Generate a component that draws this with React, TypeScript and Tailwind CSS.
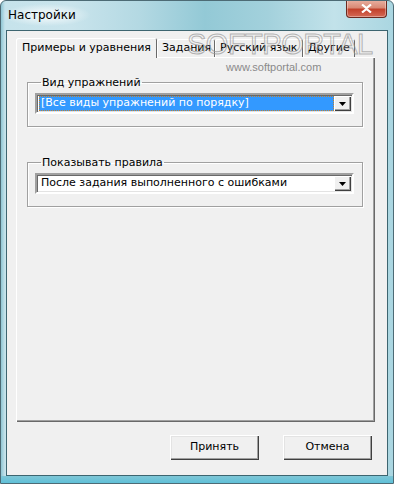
const FONT = "font-['DejaVu_Sans',_'Liberation_Sans',_sans-serif]";

const TABS = [
  { label: "Примеры и уравнения", w: "w-[141px]", active: true },
  { label: "Задания", w: "w-[58px]", active: false },
  { label: "Русский язык", w: "w-[88px]", active: false },
  { label: "Другие", w: "w-[52px]", active: false },
];

function Arrow() {
  return (
    <svg width="7" height="4" viewBox="0 0 7 4">
      <path d="M0 0h7L3.5 4z" fill="#000" />
    </svg>
  );
}

function Combo({ value, selected }: { value: string; selected?: boolean }) {
  return (
    <div className="flex h-[21px] border-2 border-t-[#a0a0a0] border-l-[#a0a0a0] border-b-white border-r-white bg-white shadow-[inset_1px_1px_0_#696969,inset_-1px_-1px_0_#e3e3e3]">
      <div className="flex-1 flex items-center p-[1px] pl-[2px] pr-0">
        <div
          className={
            selected
              ? "flex-1 h-full flex items-center bg-[#3399ff] text-white border border-dotted border-[#c08030] pl-[1px]"
              : "flex-1 h-full flex items-center text-black pl-[2px]"
          }
        >
          {value}
        </div>
      </div>
      <div className="w-[17px] mt-[1px] mb-[1px] mr-[1px] flex items-center justify-center bg-[#f0f0f0] shadow-[inset_1px_1px_0_#fff,inset_-1px_-1px_0_#404040,inset_-2px_-2px_0_#a0a0a0]">
        <Arrow />
      </div>
    </div>
  );
}

function Group({ title, children }: { title: string; children: React.ReactNode }) {
  return (
    <fieldset className="border border-[#a0a0a0] shadow-[1px_1px_0_#fff,inset_1px_1px_0_#fff] px-[7px] pt-[4px] pb-[15px] pr-[8px] h-[51px]">
      <legend className="ml-[6px] px-[1px] text-black leading-[13px]">{title}</legend>
      {children}
    </fieldset>
  );
}

function Button({ label }: { label: string }) {
  return (
    <div className="w-[89px] h-[25px] flex items-center justify-center bg-[#f0f0f0] text-black shadow-[inset_1px_1px_0_#fff,inset_-1px_-1px_0_#404040,inset_-2px_-2px_0_#a0a0a0,inset_2px_2px_0_#e3e3e3]">
      {label}
    </div>
  );
}

export default function App() {
  return (
    <div
      className={`relative w-[394px] h-[484px] flex flex-col overflow-hidden rounded-t-[6px] border border-[#4d6b75] text-[11px] ${FONT} bg-[linear-gradient(90deg,#8fc6d4_0px,#c6e3eb_4px,#c9e4ec_18%,#b4d9e3_35%,#93c9d6_52%,#a3d1dc_68%,#c2e2ea_85%,#aad6e1_100%)]`}
    >
      {/* Title bar */}
      <div className="h-[29px] flex items-start shrink-0">
        <div className="ml-[2px] mt-[3px] pl-[5px] pr-[14px] pt-[3px] pb-[3px] text-[12px] text-black leading-[16px] rounded-full bg-[radial-gradient(ellipse_at_center,rgba(255,255,255,0.55)_30%,rgba(255,255,255,0)_72%)]">
          Настройки
        </div>
        <div className="ml-auto mr-[6px] -mt-[1px] w-[41px] h-[18px] rounded-b-[4px] border border-t-0 border-[#6b2a20] bg-[linear-gradient(180deg,#e9b1a2_0%,#d98a76_45%,#c2412b_55%,#d46a55_100%)] flex items-center justify-center shadow-[inset_0_0_0_1px_rgba(255,255,255,0.35)]">
          <svg width="11" height="9" viewBox="0 0 11 9">
            <path d="M1 0.5l4.5 3.5 4.5-3.5M1 8.5l4.5-3.5 4.5 3.5" stroke="#fff" strokeWidth="2.2" fill="none" />
          </svg>
        </div>
      </div>

      {/* Client area */}
      <div className="flex-1 mx-[5px] border border-[#3d6570] bg-[#f0f0f0] flex flex-col pl-[9px] pr-[9px] pt-[7px]">
        {/* Tabs */}
        <div className="flex items-end h-[19px]">
          {TABS.map((t) => (
            <div
              key={t.label}
              className={
                t.active
                  ? `${t.w} h-[20px] -mb-[1px] relative z-10 bg-[#f0f0f0] rounded-t-[2px] shadow-[inset_1px_1px_0_#fff,inset_-1px_0_0_#696969] flex items-center pl-[6px] text-black`
                  : `${t.w} h-[18px] bg-[#f0f0f0] rounded-t-[2px] shadow-[inset_1px_1px_0_#fff,inset_-1px_0_0_#696969] flex items-center pl-[5px] text-black`
              }
            >
              {t.label}
            </div>
          ))}
        </div>

        {/* Panel */}
        <div className="w-[359px] h-[365px] bg-[#f0f0f0] shadow-[inset_1px_1px_0_#fff,inset_-1px_-1px_0_#696969,inset_-2px_-2px_0_#a0a0a0] pl-[11px] pr-[12px] pt-[19px] flex flex-col gap-[29px]">
          <Group title="Вид упражнений">
            <Combo value="[Все виды упражнений по порядку]" selected />
          </Group>
          <Group title="Показывать правила">
            <Combo value="После задания выполненного с ошибками" />
          </Group>
        </div>

        {/* Buttons */}
        <div className="flex justify-end gap-[24px] mt-[13px] pr-[6px]">
          <Button label="Принять" />
          <Button label="Отмена" />
        </div>
      </div>

      {/* bottom frame */}
      <div className="h-[7px] shrink-0 bg-[linear-gradient(180deg,#7fc6d6,#5fc0d8)]" />

      {/* Watermark */}
      <div className="absolute left-[186px] top-[29px] pointer-events-none flex flex-col items-start">
        <div className="text-[29px] leading-[28px] tracking-[-0.5px] font-['Liberation_Sans',sans-serif] text-transparent [-webkit-text-stroke:1px_rgba(150,150,150,0.7)]">
          SOFTPORTAL
        </div>
        <div className="ml-[39px] mt-[1px] text-[11px] text-[#8a8a8a] font-['Liberation_Sans',sans-serif]">
          www.softportal.com
        </div>
      </div>
    </div>
  );
}
